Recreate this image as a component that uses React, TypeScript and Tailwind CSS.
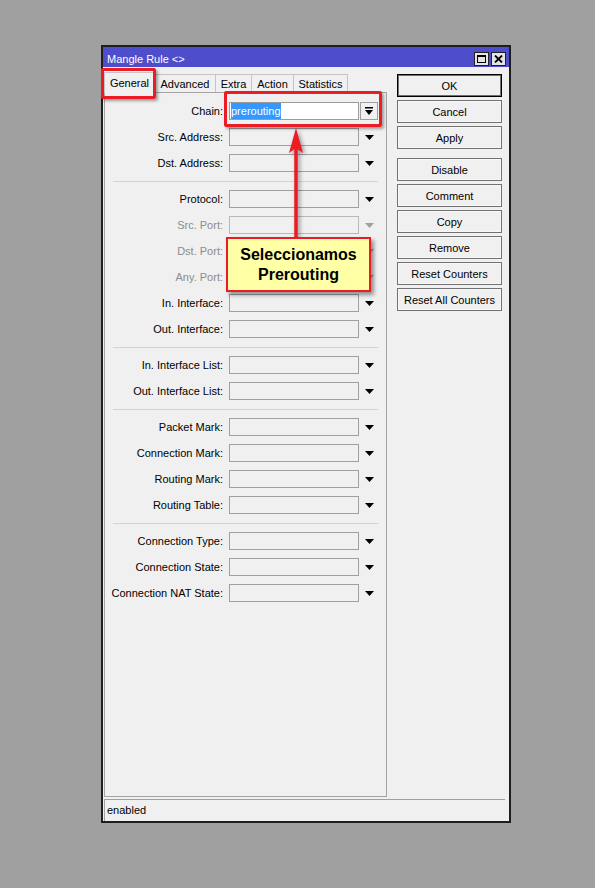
import React from "react";

type Row =
  | { kind: "sep" }
  | { kind: "row"; label: string; disabled?: boolean; chain?: boolean };

const rows: Row[] = [
  { kind: "row", label: "Chain:", chain: true },
  { kind: "row", label: "Src. Address:" },
  { kind: "row", label: "Dst. Address:" },
  { kind: "sep" },
  { kind: "row", label: "Protocol:" },
  { kind: "row", label: "Src. Port:", disabled: true },
  { kind: "row", label: "Dst. Port:", disabled: true },
  { kind: "row", label: "Any. Port:", disabled: true },
  { kind: "row", label: "In. Interface:" },
  { kind: "row", label: "Out. Interface:" },
  { kind: "sep" },
  { kind: "row", label: "In. Interface List:" },
  { kind: "row", label: "Out. Interface List:" },
  { kind: "sep" },
  { kind: "row", label: "Packet Mark:" },
  { kind: "row", label: "Connection Mark:" },
  { kind: "row", label: "Routing Mark:" },
  { kind: "row", label: "Routing Table:" },
  { kind: "sep" },
  { kind: "row", label: "Connection Type:" },
  { kind: "row", label: "Connection State:" },
  { kind: "row", label: "Connection NAT State:" },
];

const buttonsA = ["OK", "Cancel", "Apply"];
const buttonsB = ["Disable", "Comment", "Copy", "Remove", "Reset Counters", "Reset All Counters"];

const tabs = [
  { name: "General", w: "w-[51px]" },
  { name: "Advanced", w: "w-[61px]" },
  { name: "Extra", w: "w-[36px]" },
  { name: "Action", w: "w-[42px]" },
  { name: "Statistics", w: "w-[54px]" },
];

function DownArrow({ gray }: { gray?: boolean }) {
  return (
    <svg width="9" height="5" viewBox="0 0 9 5">
      <polygon points="0,0 9,0 4.5,5" fill={gray ? "#a0a0a0" : "#000"} />
    </svg>
  );
}

function Btn({ label, def }: { label: string; def?: boolean }) {
  return (
    <div
      className={
        "h-[23px] w-[105px] flex items-center justify-center bg-[#f0f0f0] pt-[1px] " +
        (def
          ? "border border-black shadow-[inset_0_0_0_1px_#707070]"
          : "border border-[#727272] shadow-[inset_0_0_0_1px_#f8f8f8]")
      }
    >
      {label}
    </div>
  );
}

export default function App() {
  return (
    <div className="w-[595px] h-[888px] bg-[#a0a0a0] pt-[45px] pl-[101px] font-['Liberation_Sans',Arial,sans-serif] text-[11px] text-black leading-none">
      <div className="relative w-[410px] h-[778px] border-2 border-[#1e1e1e] bg-[#f0f0f0] flex flex-col">
        {/* Title bar */}
        <div className="h-[20px] bg-[#4e4ecc] flex items-end justify-between pl-[4px] pr-[3px] pb-[1px]">
          <div className="text-white text-[11px] self-center pt-[5px]">Mangle Rule &lt;&gt;</div>
          <div className="flex gap-[2px]">
            <div className="w-[15px] h-[14px] bg-[#e4e4e4] border border-[#222] flex items-center justify-center">
              <div className="w-[9px] h-[8px] border border-black border-t-2" />
            </div>
            <div className="w-[15px] h-[14px] bg-[#e4e4e4] border border-[#222] flex items-center justify-center">
              <svg width="9" height="8" viewBox="0 0 9 8">
                <path d="M1 0.5 L8 7.5 M8 0.5 L1 7.5" stroke="#000" strokeWidth="1.8" />
              </svg>
            </div>
          </div>
        </div>

        {/* Body */}
        <div className="h-[730px] flex">
          {/* Left: tabs + panel */}
          <div className="ml-[1px] w-[283px] flex flex-col">
            <div className="h-[25px] flex items-end">
              {tabs.map((t, i) =>
                i === 0 ? (
                  <div
                    key={t.name}
                    className={
                      t.w +
                      " relative z-10 h-[21px] -mb-px bg-[#f0f0f0] border-t border-l border-r border-[#c4c4c4] flex items-center justify-center"
                    }
                  >
                    {t.name}
                  </div>
                ) : (
                  <div
                    key={t.name}
                    className={
                      t.w +
                      " h-[18px] bg-[#f0f0f0] border-t border-r border-[#c4c4c4] flex items-center justify-center pt-[1px]"
                    }
                  >
                    {t.name}
                  </div>
                )
              )}
            </div>
            <div className="h-[705px] border border-[#a4a4a4] pt-[5px]">
              {rows.map((r, i) =>
                r.kind === "sep" ? (
                  <div key={i} className="h-[10px] flex items-center">
                    <div className="ml-[8px] w-[265px] h-px bg-[#d3d3d3]" />
                  </div>
                ) : (
                  <div key={i} className="h-[26px] flex items-center">
                    <div
                      className={
                        "w-[118px] text-right whitespace-nowrap pt-[1px] " +
                        (r.disabled ? "text-[#8c8c8c]" : "text-black")
                      }
                    >
                      {r.label}
                    </div>
                    {r.chain ? (
                      <>
                        <div className="ml-[6px] w-[130px] h-[18px] bg-white border border-[#9c9c9c] flex items-stretch pl-[1px]">
                          <span className="bg-[#3399ff] text-white flex items-center pt-[1px]">prerouting</span>
                        </div>
                        <div className="ml-[1px] w-[18px] h-[18px] bg-[#f0f0f0] border border-[#a0a0a0] flex items-center justify-center">
                          <svg width="8" height="8" viewBox="0 0 8 8">
                            <rect x="0" y="0" width="8" height="1.5" fill="#000" />
                            <polygon points="0,3 8,3 4,8" fill="#000" />
                          </svg>
                        </div>
                      </>
                    ) : (
                      <>
                        <div
                          className={
                            "ml-[6px] w-[130px] h-[18px] bg-[#f0f0f0] border " +
                            (r.disabled ? "border-[#b8b8b8]" : "border-[#a0a0a0]")
                          }
                        />
                        <div className="w-[20px] flex items-center justify-center">
                          <DownArrow gray={r.disabled} />
                        </div>
                      </>
                    )}
                  </div>
                )
              )}
            </div>
          </div>

          {/* Right: buttons */}
          <div className="ml-[10px] mt-[7px] flex flex-col">
            <div className="flex flex-col gap-[3px]">
              {buttonsA.map((b) => (
                <Btn key={b} label={b} def={b === "OK"} />
              ))}
            </div>
            <div className="mt-[9px] flex flex-col gap-[3px]">
              {buttonsB.map((b) => (
                <Btn key={b} label={b} />
              ))}
            </div>
          </div>
        </div>

        {/* Status bar */}
        <div className="ml-[1px] mr-[4px] mt-[2px] h-[22px] border-t border-l border-[#a0a0a0] pl-[2px] flex items-center">
          enabled
        </div>

        {/* Overlays: annotation highlights */}
        <div className="absolute left-[-2px] top-[21px] w-[55px] h-[31px] border-[3px] border-[#ec1c24] rounded-[2px] shadow-[2px_2px_3px_rgba(0,0,0,0.35)] z-20" />
        <div className="absolute left-[121px] top-[44px] w-[158px] h-[36px] border-[3px] border-[#ec1c24] rounded-[2px] shadow-[2px_2px_3px_rgba(0,0,0,0.35)] z-20" />
        <svg
          className="absolute left-[183px] top-[79px] z-20 drop-shadow-[2px_2px_2px_rgba(0,0,0,0.4)]"
          width="20"
          height="112"
          viewBox="0 0 20 112"
        >
          <line x1="10" y1="20" x2="10" y2="112" stroke="#ec1c24" strokeWidth="3.5" />
          <polygon points="10,2 3,27 10,22 17,27" fill="#ec1c24" />
        </svg>
        <div className="absolute left-[123px] top-[190px] w-[145px] h-[55px] bg-[#ffffa6] border-[2.5px] border-[#ec1c24] shadow-[3px_3px_4px_rgba(0,0,0,0.4)] z-20 flex flex-col items-center pt-[6px] text-[16px] font-bold leading-[20px] text-black">
          <div>Seleccionamos</div>
          <div>Prerouting</div>
        </div>
      </div>
    </div>
  );
}
